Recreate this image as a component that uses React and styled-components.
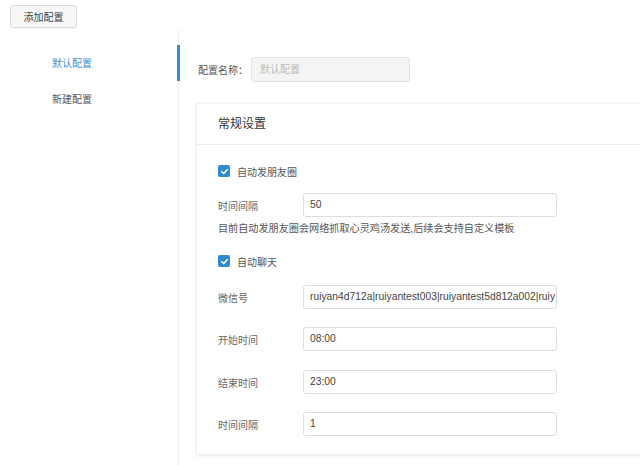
import React from "react";
import styled, { createGlobalStyle } from "styled-components";

const Global = createGlobalStyle`
  html, body { margin: 0; padding: 0; background: #fff; overflow: hidden; }
  body { font-family: "Liberation Sans", "Noto Sans CJK SC", sans-serif; font-size: 10px; color: #555; }
  * { box-sizing: border-box; }
`;

const Page = styled.div`
  width: 640px;
  height: 465px;
  display: flex;
  flex-direction: column;
`;

const TopBar = styled.div`
  padding: 5px 10px 0;
  height: 30px;
`;

const Button = styled.button`
  width: 67px;
  height: 23px;
  border: 1px solid #dcdcdc;
  border-radius: 3px;
  background: #f7f7f7;
  color: #444;
  font-family: inherit;
  font-size: 10px;
  padding: 0;
  box-shadow: 0 1px 1px rgba(0,0,0,0.04);
`;

const Main = styled.div`
  flex: 1;
  display: flex;
`;

const Sidebar = styled.div`
  width: 179px;
  flex-shrink: 0;
  border-right: 1px solid #ececec;
  padding-top: 15px;
`;

const NavItem = styled.div`
  position: relative;
  height: 36px;
  line-height: 37px;
  padding-left: 52px;
  color: ${p => (p.$active ? "#3a92d3" : "#555")};
  &::after {
    content: "";
    display: ${p => (p.$active ? "block" : "none")};
    position: absolute;
    right: -2px;
    top: 0;
    width: 3px;
    height: 36px;
    background: #3a8ccc;
  }
`;

const Content = styled.div`
  flex: 1;
  padding: 27px 0 0 17px;
  min-width: 0;
`;

const NameRow = styled.div`
  display: flex;
  align-items: center;
  height: 25px;
  padding-left: 2px;
`;

const NameLabel = styled.span`
  width: 53px;
  color: #555;
`;

const NameInput = styled.div`
  width: 159px;
  height: 25px;
  border: 1px solid #e3e3e3;
  border-radius: 3px;
  background: #f4f4f4;
  color: #bbb;
  padding-left: 8px;
  line-height: 23px;
`;

const Card = styled.div`
  margin-top: 21px;
  width: 470px;
  border: 1px solid #f0f0f0;
  box-shadow: 0 1px 4px rgba(0,0,0,0.08);
  background: #fff;
`;

const CardHeader = styled.div`
  height: 41px;
  line-height: 40px;
  padding-left: 21px;
  border-bottom: 1px solid #ececec;
  font-size: 12px;
  color: #333;
`;

const CardBody = styled.div`
  padding: 19px 21px 18px;
`;

const CheckRow = styled.label`
  display: flex;
  align-items: center;
  height: 14px;
  margin-top: ${p => p.$mt || 0}px;
  color: #555;
`;

const Box = styled.span`
  width: 12px;
  height: 12px;
  border-radius: 2px;
  background: #2f8bcc;
  display: flex;
  align-items: center;
  justify-content: center;
  margin-right: 7px;
`;

const FieldRow = styled.div`
  display: flex;
  align-items: center;
  height: 24px;
  margin-top: ${p => p.$mt || 0}px;
`;

const FieldLabel = styled.span`
  width: 85px;
  color: #666;
`;

const FieldInput = styled.div`
  width: 254px;
  height: 24px;
  border: 1px solid #dedede;
  border-radius: 3px;
  background: #fff;
  color: #444;
  padding-left: 6px;
  line-height: 22px;
  white-space: nowrap;
  overflow: hidden;
  font-size: 10.3px;
`;

const Help = styled.div`
  margin-top: 5px;
  height: 14px;
  line-height: 14px;
  color: #555;
  font-size: 10.15px;
`;

const Check = () => (
  <Box>
    <svg width="9" height="9" viewBox="0 0 10 10">
      <path d="M2 5.2 L4.2 7.3 L8.2 2.8" fill="none" stroke="#fff" strokeWidth="1.7" strokeLinecap="round" strokeLinejoin="round" />
    </svg>
  </Box>
);

export default function App() {
  return (
    <Page>
      <Global />
      <TopBar>
        <Button>添加配置</Button>
      </TopBar>
      <Main>
        <Sidebar>
          <NavItem $active>默认配置</NavItem>
          <NavItem>新建配置</NavItem>
        </Sidebar>
        <Content>
          <NameRow>
            <NameLabel>配置名称：</NameLabel>
            <NameInput>默认配置</NameInput>
          </NameRow>
          <Card>
            <CardHeader>常规设置</CardHeader>
            <CardBody>
              <CheckRow><Check />自动发朋友圈</CheckRow>
              <FieldRow $mt={15}>
                <FieldLabel>时间间隔</FieldLabel>
                <FieldInput>50</FieldInput>
              </FieldRow>
              <Help>目前自动发朋友圈会网络抓取心灵鸡汤发送,后续会支持自定义模板</Help>
              <CheckRow $mt={18}><Check />自动聊天</CheckRow>
              <FieldRow $mt={17}>
                <FieldLabel>微信号</FieldLabel>
                <FieldInput>ruiyan4d712a|ruiyantest003|ruiyantest5d812a002|ruiy</FieldInput>
              </FieldRow>
              <FieldRow $mt={18}>
                <FieldLabel>开始时间</FieldLabel>
                <FieldInput>08:00</FieldInput>
              </FieldRow>
              <FieldRow $mt={19}>
                <FieldLabel>结束时间</FieldLabel>
                <FieldInput>23:00</FieldInput>
              </FieldRow>
              <FieldRow $mt={18}>
                <FieldLabel>时间间隔</FieldLabel>
                <FieldInput>1</FieldInput>
              </FieldRow>
            </CardBody>
          </Card>
        </Content>
      </Main>
    </Page>
  );
}
